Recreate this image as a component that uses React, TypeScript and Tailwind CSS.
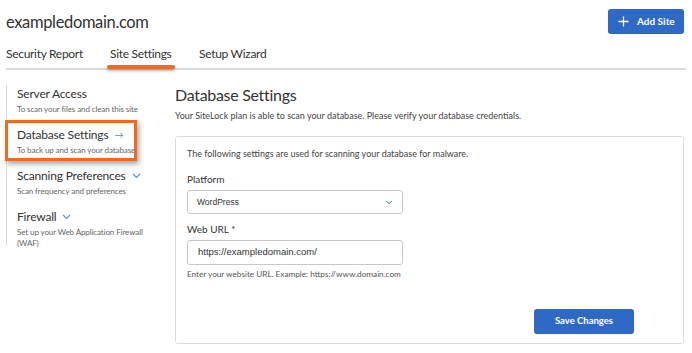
import React from "react";

const font = { fontFamily: "Lato, 'Open Sans', sans-serif" };

export default function App() {
  return (
    <div className="w-[692px] h-[353px] bg-white relative overflow-hidden text-[#333]" style={font}>
      {/* header */}
      <div className="flex items-start justify-between pl-[6px] pr-[8px] pt-[9px]">
        <div className="text-[16.5px] tracking-[-0.35px] leading-[24px] text-[#333] pt-[1px]">exampledomain.com</div>
        <button className="h-[25px] w-[76px] rounded-[3px] bg-[#2e69c5] text-white text-[10px] font-bold flex items-center pl-[10px] gap-[8px]">
          <svg width="11" height="11" viewBox="0 0 11 11"><path d="M5.5 0.5v10M0.5 5.5h10" stroke="white" strokeWidth="1.3" /></svg>
          Add Site
        </button>
      </div>
      {/* tabs */}
      <div className="mx-[6px] mt-[10px] border-b-2 border-[#d9d9d9] flex text-[12px] tracking-[-0.3px] leading-[20px] text-[#333] relative h-[26px]">
        <div className="w-[104px]">Security Report</div>
        <div className="w-[89px] relative">
          <span className="relative inline-block">
            Site Settings
            <span className="absolute left-[-3px] right-[-3px] top-[21px] h-[4px] rounded-full bg-[#f26b1d] shadow-[0_2px_3px_rgba(0,0,0,0.3)]" />
          </span>
        </div>
        <div>Setup Wizard</div>
      </div>
      {/* body */}
      <div className="flex mt-[15px] pl-[6px]">
        <div className="w-[169px] relative">
          <div className="border-l border-[#dcdcdc] pl-[10px] pt-[1px] pb-[10px] h-[160px]">
            <div className="text-[12px] tracking-[-0.2px] leading-[16px] text-[#333]">Server Access</div>
            <div className="text-[8px] tracking-[-0.1px] leading-[11px] text-[#666] mt-[2px]">To scan your files and clean this site</div>
            <div className="mt-[12px] text-[12px] tracking-[-0.2px] leading-[16px] text-[#333] flex items-center gap-[6px]">
              Database Settings
              <span className="text-[#5b8fd6] text-[9px]">→</span>
            </div>
            <div className="text-[8px] tracking-[-0.1px] leading-[11px] text-[#666] mt-[2px]">To back up and scan your database</div>
            <div className="mt-[12px] text-[12px] tracking-[-0.2px] leading-[16px] text-[#333] flex items-center gap-[6px]">
              Scanning Preferences
              <svg width="9" height="6" viewBox="0 0 9 6"><path d="M1 1l3.5 3.5L8 1" stroke="#5b8fd6" strokeWidth="1.1" fill="none" /></svg>
            </div>
            <div className="text-[8px] tracking-[-0.1px] leading-[11px] text-[#666] mt-[2px]">Scan frequency and preferences</div>
            <div className="mt-[12px] text-[12px] tracking-[-0.2px] leading-[16px] text-[#333] flex items-center gap-[6px]">
              Firewall
              <svg width="9" height="6" viewBox="0 0 9 6"><path d="M1 1l3.5 3.5L8 1" stroke="#5b8fd6" strokeWidth="1.1" fill="none" /></svg>
            </div>
            <div className="text-[8px] tracking-[-0.1px] leading-[11px] text-[#666] mt-[2px] w-[130px]">Set up your Web Application Firewall (WAF)</div>
          </div>
          <div className="absolute left-[-1px] top-[35px] w-[132px] h-[41px] border-[3px] border-[#f26b1d] shadow-[2px_3px_5px_rgba(0,0,0,0.35)]" />
        </div>
        <div className="flex-1 pr-[8px]">
          <div className="text-[16px] tracking-[-0.3px] leading-[22px] text-[#333] -mt-[1px]">Database Settings</div>
          <div className="text-[9px] leading-[12px] text-[#444] mt-[4px]">Your SiteLock plan is able to scan your database. Please verify your database credentials.</div>
          <div className="mt-[14px] border border-[#dcdcdc] rounded-[3px] h-[208px] px-[11px] pt-[11px]">
            <div className="text-[9px] leading-[12px] text-[#444]">The following settings are used for scanning your database for malware.</div>
            <div className="mt-[13px] text-[10px] leading-[13px] text-[#333]">Platform</div>
            <div className="mt-[4px] w-[216px] h-[24px] border border-[#c8c8c8] rounded-[3px] flex items-center justify-between pl-[9px] pr-[9px] text-[8.5px] text-[#333]" style={{ fontFamily: "'Liberation Sans', Arial, sans-serif" }}>
              WordPress
              <svg width="8" height="5" viewBox="0 0 8 5"><path d="M1 1l3 2.5L7 1" stroke="#4a7cc9" strokeWidth="1" fill="none" /></svg>
            </div>
            <div className="mt-[9px] text-[10px] leading-[13px] text-[#333]">Web URL *</div>
            <div className="mt-[4px] w-[216px] h-[25px] border border-[#c8c8c8] rounded-[3px] flex items-center px-[10px] text-[9.5px] text-[#333]" style={{ fontFamily: "'Liberation Sans', Arial, sans-serif" }}>
              https://exampledomain.com/
            </div>
            <div className="mt-[4px] text-[8.2px] leading-[11px] text-[#555]">Enter your website URL. Example: https://www.domain.com</div>
            <div className="flex justify-end pr-[38px] mt-[29px]">
              <button className="w-[100px] h-[25px] rounded-[3px] bg-[#2e69c5] text-white text-[9.5px] font-bold">Save Changes</button>
            </div>
          </div>
        </div>
      </div>
    </div>
  );
}
